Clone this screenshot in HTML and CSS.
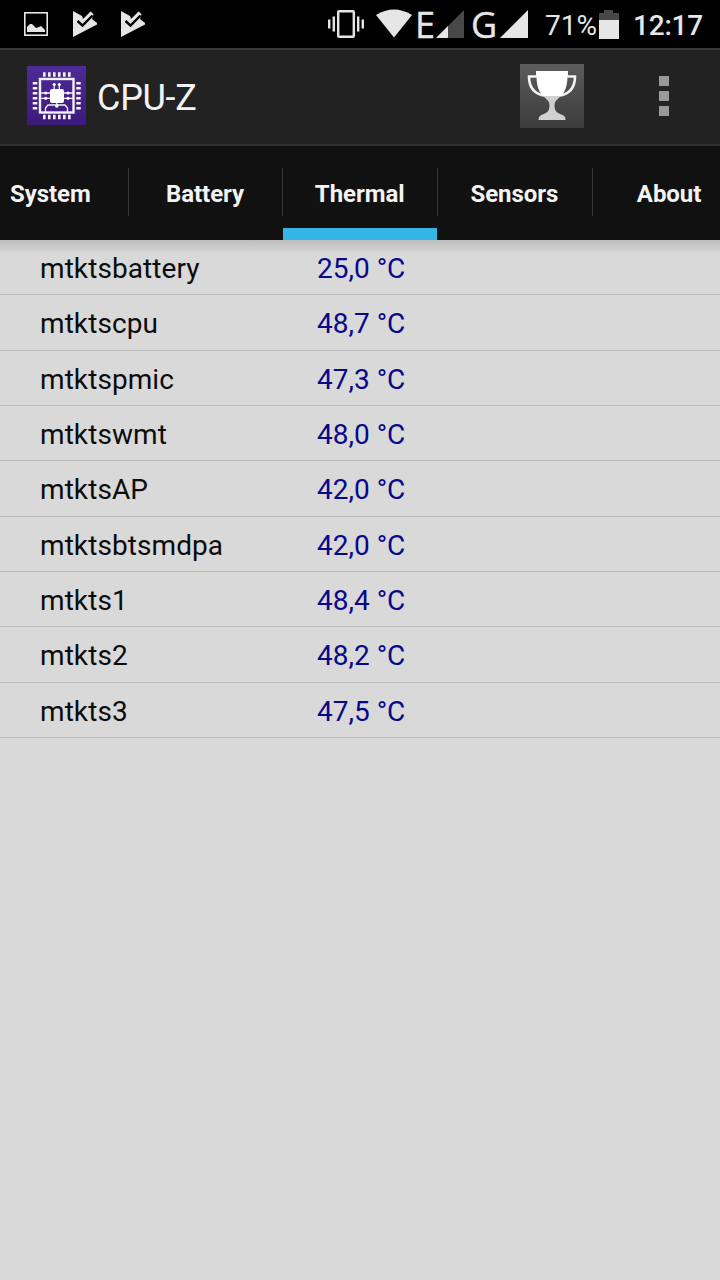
FILE: index.html
```html
<!DOCTYPE html>
<html lang="en">
<head>
<meta charset="utf-8">
<title>CPU-Z</title>
<link rel="stylesheet" href="styles.css">
</head>
<body>
<div class="screen">
  <header class="status">
    <div class="notifications">
      <svg class="picture" width="24" height="24" viewBox="0 0 24 24"><rect x=".8" y=".8" width="22.4" height="22.4" fill="none" stroke="#e6e6e6" stroke-width="1.6"/><path d="M3 20v-5l3-3h2l4 4 3-1 2-1 4 4v2z" fill="#e6e6e6"/></svg>
      <svg class="play" width="26" height="28" viewBox="0 0 26 28"><path d="M1 1 10 6 11 9 18.500 1.500 21.500 4 20 9 25 13 25 14.500 1 27z" fill="#e6e6e6"/><path d="M5.500 11 10.500 15.500 20.500 5.500" fill="none" stroke="#000" stroke-width="2.400"/></svg>
      <svg class="play" width="26" height="28" viewBox="0 0 26 28"><path d="M1 1 10 6 11 9 18.500 1.500 21.500 4 20 9 25 13 25 14.500 1 27z" fill="#e6e6e6"/><path d="M5.500 11 10.500 15.500 20.500 5.500" fill="none" stroke="#000" stroke-width="2.400"/></svg>
    </div>
    <div class="indicators">
      <svg class="vibrate" width="36" height="28" viewBox="0 0 36 28"><rect x="10.2" y="1.2" width="15.6" height="25.6" rx="1" fill="none" stroke="#e6e6e6" stroke-width="2.4"/><path d="M1.2 9.5v9M5.8 6.5v15M30.2 6.5v15M34.8 9.5v9" stroke="#e6e6e6" stroke-width="2.4"/></svg>
      <svg class="wifi" width="36" height="29" viewBox="0 0 36 29"><path d="M0 6Q18-5 36 6L18 28.500z" fill="#e6e6e6"/></svg>
      <span class="network">E</span>
      <svg class="signal" width="28" height="28" viewBox="0 0 28 28"><path d="M28 0v28H0z" fill="#484848"/><path d="M12 16v12H0z" fill="#e6e6e6"/></svg>
      <span class="network network-g">G</span>
      <svg class="signal" width="28" height="28" viewBox="0 0 28 28"><path d="M28 0v28H0z" fill="#e6e6e6"/></svg>
      <span class="percent">71%</span>
      <svg class="battery" width="20" height="29" viewBox="0 0 20 29"><path d="M0 3h5V0h9v3h6v7H0z" fill="#484848"/><path d="M0 10h20v19H0z" fill="#e6e6e6"/></svg>
      <span class="clock">12:17</span>
    </div>
  </header>
  <div class="appbar">
    <svg class="logo" width="59" height="59" viewBox="0 0 59 59">
      <defs><linearGradient id="violet" x2="0" y2="1"><stop stop-color="#4d2b96"/><stop offset="1" stop-color="#3c1a7c"/></linearGradient></defs>
      <path d="M0 0h59v59H0z" fill="url(#violet)"/>
      <g fill="none" stroke="#f5f1fa">
        <path d="M16 8.500h28M16 51h28" stroke-width="4.500" stroke-dasharray="2.600 2.400"/>
        <path d="M8 16v28M51.500 16v28" stroke-width="4.500" stroke-dasharray="2.600 2.400"/>
        <rect x="13" y="13" width="33.500" height="33.500" stroke-width="2.400"/>
        <path d="M27.200 23v-5M32.300 23v-5M23 27h-9M23 32.300h-9M37 27h9M37 32.300h9M29.800 36v3M18.500 46v-4l2.500-3h17l2.500 3v4" stroke-width="1.300"/>
      </g>
      <g fill="#fff"><rect x="23" y="23" width="14" height="14" rx="2"/><circle cx="27.200" cy="18.500" r="1.600"/><circle cx="32.300" cy="18.500" r="1.600"/><circle cx="18.700" cy="27" r="1.600"/><circle cx="18.700" cy="32.300" r="1.600"/><circle cx="41" cy="27" r="1.600"/><circle cx="41" cy="32.300" r="1.600"/><circle cx="29.800" cy="40" r="1.800"/></g>
    </svg>
    <h1 class="title">CPU-Z</h1>
    <div class="trophy">
      <svg width="64" height="64" viewBox="0 0 64 64">
        <path d="M17 12.500H9C9 22 13 29 23 31.500M47 12.500h8C55 22 51 29 41 31.500" fill="none" stroke="#f3f3f3" stroke-width="2.600"/>
        <path d="M16 7h32v4h-.5C47.500 20 46 27 41 32.500H23C18 27 16.500 20 16.500 11H16z" fill="#fff"/>
        <path d="M23 32h18c-3 2.500-6.500 5-6.500 9 0 7 3 8 8 10q3 1 3 5h-27q0-4 3-5c5-2 8-3 8-10 0-4-3.500-6.500-6.500-9z" fill="#d0d0d0"/>
      </svg>
    </div>
    <div class="overflow"><i class="dot"></i><i class="dot"></i><i class="dot"></i></div>
  </div>
  <nav class="tabs">
    <div class="tab">System</div>
    <div class="tab">Battery</div>
    <div class="tab active">Thermal</div>
    <div class="tab">Sensors</div>
    <div class="tab">About</div>
  </nav>
  <main class="readings">
    <div class="row"><span class="name">mtktsbattery</span><span class="value">25,0 °C</span></div>
    <div class="row"><span class="name">mtktscpu</span><span class="value">48,7 °C</span></div>
    <div class="row"><span class="name">mtktspmic</span><span class="value">47,3 °C</span></div>
    <div class="row"><span class="name">mtktswmt</span><span class="value">48,0 °C</span></div>
    <div class="row"><span class="name">mtktsAP</span><span class="value">42,0 °C</span></div>
    <div class="row"><span class="name">mtktsbtsmdpa</span><span class="value">42,0 °C</span></div>
    <div class="row"><span class="name">mtkts1</span><span class="value">48,4 °C</span></div>
    <div class="row"><span class="name">mtkts2</span><span class="value">48,2 °C</span></div>
    <div class="row"><span class="name">mtkts3</span><span class="value">47,5 °C</span></div>
  </main>
</div>
</body>
</html>
```
FILE: styles.css
```css
* { box-sizing: border-box; }
body { margin: 0; background: #d9d9d9; font-family: Roboto, sans-serif; }
svg { display: block; flex: none; }
.screen { width: 720px; height: 1280px; overflow: hidden; display: flex; flex-direction: column; }

.status { height: 48px; flex: none; background: #000; color: #e6e6e6; display: flex; justify-content: space-between; }
.notifications { display: flex; padding: 12px 0 0 24px; }
.play { margin: -2px 0 0 24px; }
.play + .play { margin-left: 22px; }
.indicators { display: flex; align-items: flex-start; padding: 10px 15px 0 0; white-space: nowrap; }
.wifi { margin: -1px 0 0 12px; }
.network { width: 19px; margin-left: 3px; font-family: "Open Sans", sans-serif; font-size: 36px; line-height: 30px; -webkit-text-stroke: .4px #e6e6e6; }
.signal { margin-left: 2px; }
.network-g { width: 26px; margin-left: 7px; }
.network-g + .signal { margin-left: 3px; }
.percent { width: 52px; margin-left: 17px; font-size: 28px; line-height: 32px; }
.battery { margin-left: 2px; }
.clock { width: 72px; margin-left: 14px; font-size: 28px; font-weight: 500; line-height: 32px; letter-spacing: -.2px; }

.appbar { height: 98px; flex: none; display: flex; align-items: flex-start; padding: 16px 51px 0 27px; background: #222; border-top: 2px solid #3b3b3b; border-bottom: 2px solid #313131; }
.title { margin: 11px 0 0 11px; color: #f3f3f3; font-size: 36px; font-weight: 400; line-height: 42px; letter-spacing: -.3px; }
.trophy { width: 64px; height: 64px; margin: -2px 0 0 auto; background: linear-gradient(#5c5c5c, #3c3c3c); }
.overflow { display: flex; flex-direction: column; gap: 5px; margin: 10px 0 0 75px; }
.dot { width: 10px; height: 10px; background: #999; }

.tabs { height: 94px; flex: none; display: grid; grid-template-columns: repeat(5, 154.7px); padding-top: 2px; margin-left: -27px; background: #111; }
.tab { position: relative; display: flex; justify-content: center; align-items: center; padding-bottom: 1px; color: #f3f3f3; font-size: 24px; font-weight: 700; letter-spacing: -.05px; }
.tab + .tab::before { content: ""; position: absolute; left: 0; top: 20px; width: 1px; height: 48px; background: #363636; }
.active::after { content: ""; position: absolute; left: 1px; right: 0; bottom: 0; height: 12px; background: #33b5e5; }

.readings { flex: 1; background: linear-gradient(#bcbcbc, #d9d9d9 14px); }
.row { height: 55.34px; display: flex; align-items: center; padding: 4px 0 0 40px; border-bottom: 1px solid #bababa; font-size: 28px; line-height: 32px; }
.name { width: 277px; color: #0c0c0c; letter-spacing: .08px; }
.value { color: #08088a; }
```
